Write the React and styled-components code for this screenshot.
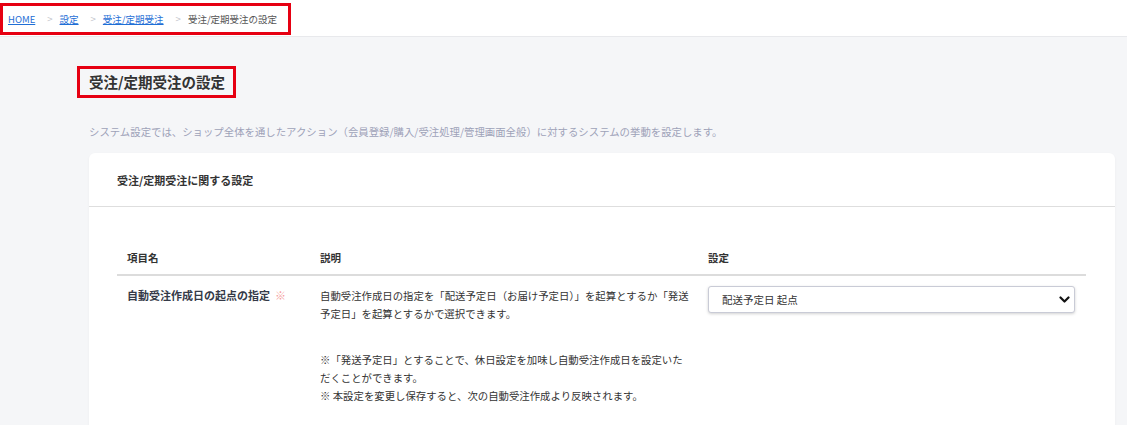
import React from "react";
import styled, { createGlobalStyle } from "styled-components";

const Global = createGlobalStyle`
  html, body { margin: 0; padding: 0; }
  body {
    background: #f5f6f8;
    font-family: "Noto Sans CJK JP", "Noto Sans", sans-serif;
    color: #333;
    -webkit-font-smoothing: antialiased;
  }
`;

const Page = styled.div`
  min-height: 425px;
  background: #f5f6f8;
`;

const TopBar = styled.header`
  height: 37px;
  background: #fff;
  border-bottom: 1px solid #e8e9ec;
  display: flex;
  align-items: flex-start;
  padding-top: 3px;
  box-sizing: border-box;
`;

const Crumbs = styled.ol`
  list-style: none;
  margin: 0;
  height: 32px;
  width: 291px;
  box-sizing: border-box;
  border: 3px solid #e60012;
  padding: 0 0 0 5px;
  display: flex;
  align-items: center;
  font-size: 9.5px;
`;

const Crumb = styled.li`
  color: #555;
  display: flex;
  align-items: center;
  white-space: nowrap;
  & + &::before {
    content: ">";
    color: #c4c6cc;
    margin-left: 12px;
    margin-right: 7px;
  }
`;

const CrumbLink = styled.a`
  color: #1f6fd6;
  text-decoration: underline;
  cursor: pointer;
`;

const Content = styled.main`
  padding: 29px 12px 0 89px;
`;

const TitleBox = styled.h1`
  display: inline-block;
  margin: 0 0 0 -12px;
  padding: 4px 8px 4px 9px;
  border: 3px solid #e60012;
  font-size: 14.5px;
  font-weight: 700;
  line-height: 18px;
  color: #333;
`;

const Lead = styled.p`
  margin: 26px 0 0;
  font-size: 10.4px;
  line-height: 16px;
  color: #9ea2b8;
`;

const Card = styled.section`
  margin-top: 13px;
  background: #fff;
  border-radius: 6px;
  box-shadow: 0 1px 3px rgba(0, 0, 0, 0.04);
`;

const CardHeader = styled.div`
  height: 54px;
  box-sizing: border-box;
  border-bottom: 1px solid #dedede;
  padding: 0 28px;
  display: flex;
  align-items: center;
  font-size: 11px;
  font-weight: 700;
  color: #333;
`;

const CardBody = styled.div`
  padding: 42px 29px 20px 28px;
`;

const Table = styled.div`
  display: grid;
  grid-template-columns: 193px 388px 1fr;
`;

const HeadCell = styled.div`
  padding: 0 10px 7px;
  font-size: 10.5px;
  line-height: 18px;
  font-weight: 700;
  color: #333;
  border-bottom: 2px solid #dcdcdc;
`;

const Cell = styled.div`
  padding: ${(p) => p.$pad};
  font-size: ${(p) => (p.$bold ? "11px" : "10.4px")};
  line-height: 18px;
  color: ${(p) => (p.$bold ? "#353a48" : "#333")};
  font-weight: ${(p) => (p.$bold ? 700 : 400)};
`;

const Required = styled.span`
  color: #f5a0a0;
  font-weight: 400;
  margin-left: 5px;
`;

const Para = styled.p`
  margin: 0 0 ${(p) => p.$gap || 0}px;
`;

const SelectWrap = styled.div`
  position: relative;
  width: 100%;
`;

const Select = styled.select`
  appearance: none;
  -webkit-appearance: none;
  width: 100%;
  height: 27px;
  box-sizing: border-box;
  border: 1px solid #c9cbd6;
  border-radius: 3px;
  background: #fff;
  box-shadow: 0 1px 3px rgba(0, 0, 0, 0.18);
  padding: 0 28px 0 13px;
  font-family: "Noto Sans CJK JP", "Noto Sans", sans-serif;
  font-size: 10.5px;
  color: #333;
  outline: none;
`;

const Chevron = styled.svg`
  position: absolute;
  right: 5px;
  top: 9px;
  width: 11px;
  height: 9px;
  pointer-events: none;
`;

export default function App() {
  return (
    <Page>
      <Global />
      <TopBar>
        <Crumbs>
          <Crumb><CrumbLink>HOME</CrumbLink></Crumb>
          <Crumb><CrumbLink>設定</CrumbLink></Crumb>
          <Crumb><CrumbLink>受注/定期受注</CrumbLink></Crumb>
          <Crumb>受注/定期受注の設定</Crumb>
        </Crumbs>
      </TopBar>
      <Content>
        <TitleBox>受注/定期受注の設定</TitleBox>
        <Lead>
          システム設定では、ショップ全体を通したアクション（会員登録/購入/受注処理/管理画面全般）に対するシステムの挙動を設定します。
        </Lead>
        <Card>
          <CardHeader>受注/定期受注に関する設定</CardHeader>
          <CardBody>
            <Table>
              <HeadCell>項目名</HeadCell>
              <HeadCell>説明</HeadCell>
              <HeadCell>設定</HeadCell>
              <Cell $bold $pad="10px 10px">
                自動受注作成日の起点の指定<Required>※</Required>
              </Cell>
              <Cell $pad="11px 6px 10px 10px">
                <Para $gap={28}>
                  自動受注作成日の指定を「配送予定日（お届け予定日）」を起算とするか「発送予定日」を起算とするかで選択できます。
                </Para>
                <Para>
                  ※「発送予定日」とすることで、休日設定を加味し自動受注作成日を設定いただくことができます。
                </Para>
                <Para>※ 本設定を変更し保存すると、次の自動受注作成より反映されます。</Para>
              </Cell>
              <Cell $pad="10px 11px 10px 10px">
                <SelectWrap>
                  <Select defaultValue="delivery">
                    <option value="delivery">配送予定日 起点</option>
                    <option value="shipping">発送予定日 起点</option>
                  </Select>
                  <Chevron viewBox="0 0 11 9">
                    <path d="M1.5 2.5 L5.5 6.5 L9.5 2.5" fill="none" stroke="#111" strokeWidth="2.2" strokeLinecap="round" strokeLinejoin="round" />
                  </Chevron>
                </SelectWrap>
              </Cell>
            </Table>
          </CardBody>
        </Card>
      </Content>
    </Page>
  );
}
